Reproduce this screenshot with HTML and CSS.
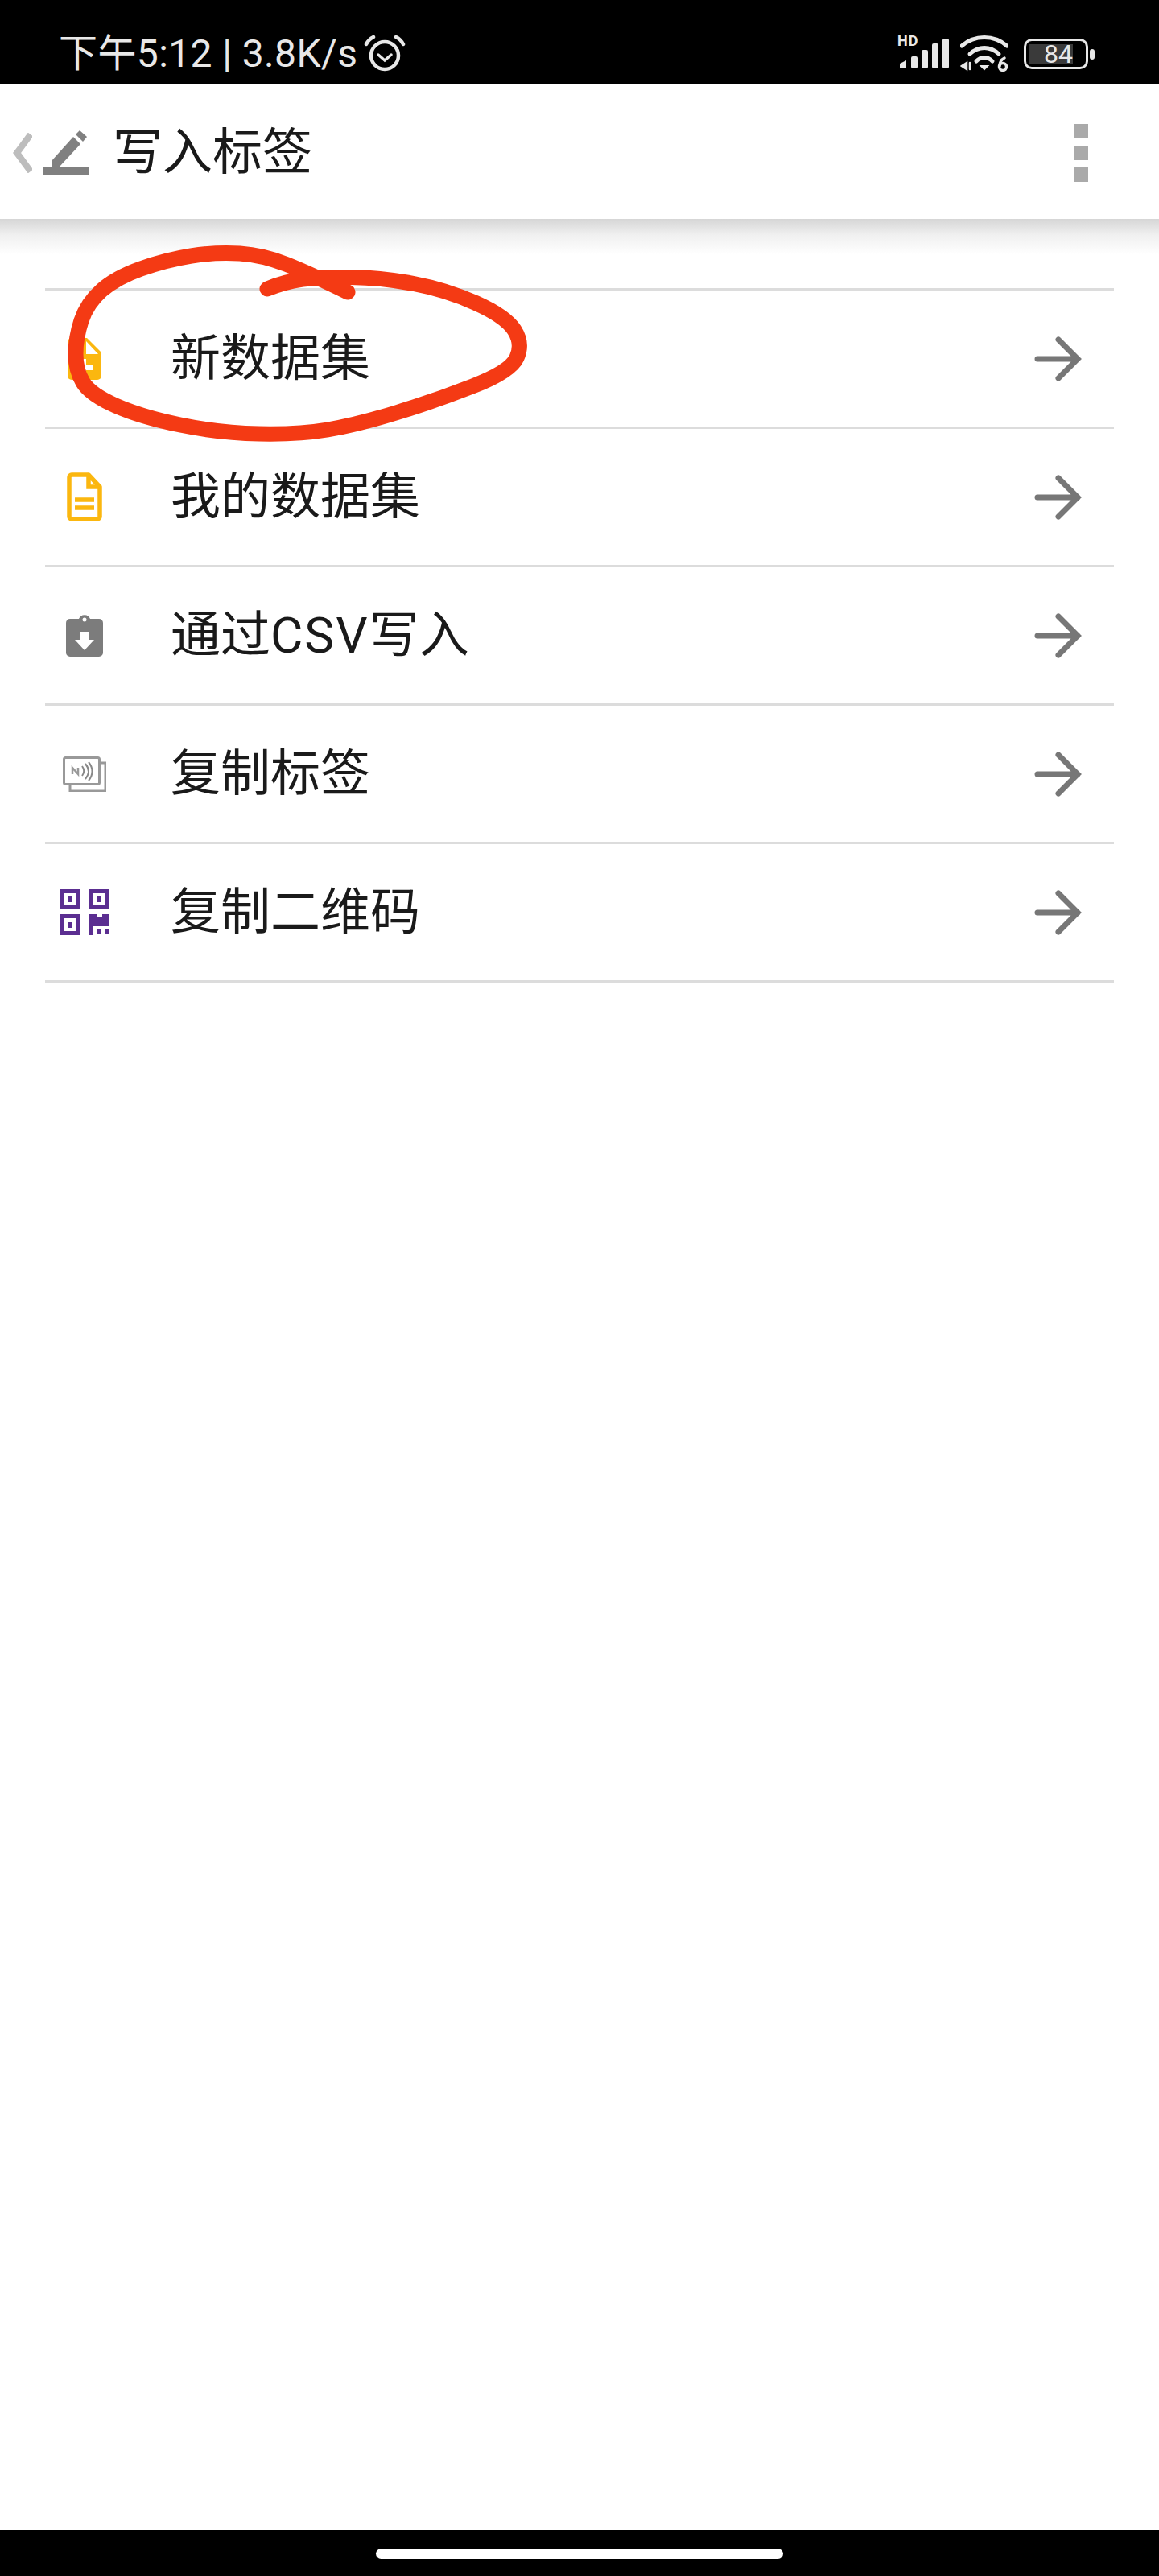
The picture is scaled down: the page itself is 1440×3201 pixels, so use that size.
FILE: index.html
```html
<!DOCTYPE html>
<html lang="zh-CN">
<head>
  <meta charset="UTF-8" />
  <meta name="viewport" content="width=device-width, initial-scale=1.0" />
  <title>写入标签</title>
  <link rel="stylesheet" href="styles.css">
</head>
<body>

  <div class="page">
    <!-- Status bar -->
    <div class="status-bar">
      <div class="status-left">
        <span class="status-text">下午5:12 | 3.8K/s</span>
        <svg class="alarm-icon" viewBox="0 0 52 46" fill="none" stroke="#e8e8e8" stroke-linecap="round">
          <circle cx="26" cy="25" r="17" stroke-width="4.5"/>
          <path d="M18 24l8 7 8-7" stroke-width="3.5"/>
          <path d="M3 11c2-4 5-7 9-9M49 11c-2-4-5-7-9-9" stroke-width="4.5"/>
        </svg>
      </div>
      <div class="status-right">
        <div class="signal">
          <span class="hd-label">HD</span>
          <svg class="signal-icon" viewBox="0 0 64 46" fill="#e8e8e8">
            <path d="M3 35l8-4v10H3z"/>
            <rect x="17" y="26" width="8" height="15" rx="2"/>
            <rect x="30" y="18" width="8" height="23" rx="2"/>
            <rect x="43" y="10" width="8" height="31" rx="2"/>
            <rect x="56" y="4" width="8" height="37" rx="2"/>
          </svg>
        </div>
        <svg class="wifi-icon" viewBox="0 0 60 46" fill="none" stroke="#e8e8e8" stroke-linecap="round">
          <path d="M2 13c16-14 40-14 56 0" stroke-width="5"/>
          <path d="M12 23c11-10 25-10 36 0" stroke-width="5"/>
          <path d="M20 32c6-6 14-6 20 0" stroke-width="5"/>
          <path d="M26 38h8l-4 4z" fill="#e8e8e8" stroke-width="2"/>
          <path d="M8 34v8l-6-4zM12 34v8" stroke-width="2.5" fill="#e8e8e8"/>
          <circle cx="53" cy="39" r="4.5" stroke-width="3.5"/>
          <path d="M49 38c0-5 2-8 6-10" stroke-width="3.5"/>
        </svg>
        <div class="battery">
          <div class="battery-body">
            <div class="battery-fill">84</div>
          </div>
          <div class="battery-nub"></div>
        </div>
      </div>
    </div>

    <!-- Toolbar -->
    <div class="toolbar">
      <svg class="back-icon" viewBox="0 0 24 50" fill="none" stroke="#bdbdbd" stroke-width="8">
        <path d="M22 2L5 25l17 23"/>
      </svg>
      <svg class="pencil-icon" viewBox="0 0 56 56" fill="#808080">
        <path d="M10 38L37 8l9 9-27 29H10z"/>
        <path d="M40 5l5-5 9 8-5 6z"/>
        <rect x="0" y="46" width="56" height="10"/>
      </svg>
      <h1 class="toolbar-title">写入标签</h1>
      <div class="more-menu">
        <span></span>
        <span></span>
        <span></span>
      </div>
    </div>

    <!-- Menu -->
    <div class="content">
      <ul class="menu-list">
        <li class="menu-row">
          <span class="row-icon">
            <svg width="42" height="52" viewBox="0 0 42 52">
              <path d="M5 0h19l18 18v29a5 5 0 0 1-5 5H5a5 5 0 0 1-5-5V5a5 5 0 0 1 5-5z" fill="#fbb70f"/>
              <path d="M23 4l15 16H23z" fill="#fff"/>
              <path d="M17 26h6v8h8v6h-8v8h-6v-8H9v-6h8z" fill="#fff"/>
            </svg>
          </span>
          <span class="row-label">新数据集</span>
          <svg class="row-arrow" viewBox="0 0 60 60" fill="none" stroke="#777" stroke-width="7" stroke-linecap="round"><path d="M5 30h50M31 6l24 24-24 24"/></svg>
        </li>
        <li class="menu-row">
          <span class="row-icon">
            <svg width="44" height="61" viewBox="0 0 44 61" fill="none" stroke="#fbb70f" stroke-width="5.5">
              <path d="M6 3h21l14 15v37a3 3 0 0 1-3 3H6a3 3 0 0 1-3-3V6a3 3 0 0 1 3-3z" stroke-linejoin="round"/>
              <path d="M27 3v15h14"/>
              <path d="M10 34h24M10 44h24"/>
            </svg>
          </span>
          <span class="row-label">我的数据集</span>
          <svg class="row-arrow" viewBox="0 0 60 60" fill="none" stroke="#777" stroke-width="7" stroke-linecap="round"><path d="M5 30h50M31 6l24 24-24 24"/></svg>
        </li>
        <li class="menu-row">
          <span class="row-icon">
            <svg width="46" height="52" viewBox="0 0 46 52">
              <path d="M5 5h11a7.500 7.500 0 0 1 14 0h11a5 5 0 0 1 5 5v37a5 5 0 0 1-5 5H5a5 5 0 0 1-5-5V10a5 5 0 0 1 5-5z" fill="#7c7c7c"/>
              <circle cx="23" cy="6" r="2.500" fill="#fff"/>
              <path d="M18 21h10v10h7L23 44 11 31h7z" fill="#fff"/>
            </svg>
          </span>
          <span class="row-label">通过<span class="latin">CSV</span>写入</span>
          <svg class="row-arrow" viewBox="0 0 60 60" fill="none" stroke="#777" stroke-width="7" stroke-linecap="round"><path d="M5 30h50M31 6l24 24-24 24"/></svg>
        </li>
        <li class="menu-row">
          <span class="row-icon">
            <svg width="54" height="44" viewBox="0 0 54 44" fill="none" stroke="#999" stroke-width="3">
              <rect x="1.500" y="1.500" width="44" height="33" rx="2"/>
              <path d="M46 8h7v35H9v-8"/>
              <path d="M12 22v-8l7 8v-8" stroke-width="2.5"/>
              <path d="M24 12c3 4 3 8 0 12M28 9c5 6 5 13 0 19M32 7c6 7 6 16 0 23" stroke="#888" stroke-width="2"/>
            </svg>
          </span>
          <span class="row-label">复制标签</span>
          <svg class="row-arrow" viewBox="0 0 60 60" fill="none" stroke="#777" stroke-width="7" stroke-linecap="round"><path d="M5 30h50M31 6l24 24-24 24"/></svg>
        </li>
        <li class="menu-row">
          <span class="row-icon">
            <svg width="62" height="57" viewBox="0 0 62 57" fill="#5b2e91">
              <path fill-rule="evenodd" d="M0 0h26v25H0zM5 5v15h16V5z"/>
              <rect x="10" y="9" width="6" height="7"/>
              <path fill-rule="evenodd" d="M36 0h26v25H36zM41 5v15h16V5z"/>
              <rect x="46" y="9" width="6" height="7"/>
              <path fill-rule="evenodd" d="M0 31h26v26H0zM5 36v16h16V36z"/>
              <rect x="10" y="41" width="6" height="7"/>
              <path d="M36 31h10v4h7v-4h9v15H41v11h-5z"/>
              <rect x="47" y="50" width="5" height="5"/>
              <rect x="56" y="50" width="5" height="5"/>
            </svg>
          </span>
          <span class="row-label">复制二维码</span>
          <svg class="row-arrow" viewBox="0 0 60 60" fill="none" stroke="#777" stroke-width="7" stroke-linecap="round"><path d="M5 30h50M31 6l24 24-24 24"/></svg>
        </li>
      </ul>
    </div>

    <!-- Nav bar -->
    <div class="nav-bar">
      <div class="nav-pill"></div>
    </div>

    <!-- Red marker scribble on top of the screenshot -->
    <svg class="scribble" viewBox="0 0 1440 3201" fill="none">
      <path d="M432 363Q385 340 356 328.500Q327 317 298 315Q269 313 237.500 318Q206 323 175 334Q144 345 126 361Q108 377 101 398.500Q94 420 94 440Q94 460 103 475Q112 490 143.500 504Q175 518 224 528Q273 538 322 539Q371 540 407 534Q443 528 492 513Q541 498 587 480Q634 462 642 444.500Q650 427 639 410Q628 393 591 376.500Q554 360 514 352.500Q474 345 436 344.500Q398 344 376 347Q354 350 332 359" stroke="#f43a14" stroke-width="19" stroke-linecap="round" stroke-linejoin="round"/>
    </svg>
  </div>

</body>
</html>
```

FILE: styles.css
```css
* {
  box-sizing: border-box;
}

html, body {
  margin: 0;
  padding: 0;
}

body {
  font-family: 'Roboto', 'Noto Sans CJK SC', sans-serif;
  background: #fff;
  color: #1a1a1a;
}

.page {
  position: relative;
  width: 1440px;
  height: 3201px;
  display: flex;
  flex-direction: column;
  overflow: hidden;
}

/* status bar */
.status-bar {
  height: 104px;
  flex: none;
  background: #000;
  color: #e8e8e8;
  display: flex;
  align-items: center;
  justify-content: space-between;
  padding: 30px 80px 0 73px;
}

.status-left {
  display: flex;
  align-items: center;
  gap: 8px;
}

.status-text {
  font-size: 48px;
  line-height: 54px;
  letter-spacing: 0.4px;
  white-space: nowrap;
}

.alarm-icon {
  width: 52px;
  height: 46px;
}

.status-right {
  display: flex;
  align-items: center;
}

.signal {
  position: relative;
  width: 64px;
  height: 46px;
  margin-right: 14px;
}

.signal-icon {
  display: block;
  width: 64px;
  height: 46px;
}

.hd-label {
  position: absolute;
  left: 0;
  top: -4px;
  font-size: 18px;
  line-height: 22px;
  font-weight: 700;
  letter-spacing: 1px;
  color: #e8e8e8;
}

.wifi-icon {
  width: 60px;
  height: 46px;
  margin-right: 19px;
}

.battery {
  display: flex;
  align-items: center;
  gap: 2px;
}

.battery-body {
  width: 80px;
  height: 38px;
  border: 3px solid #e8e8e8;
  border-radius: 10px;
  padding: 4px;
}

.battery-fill {
  width: 54px;
  height: 24px;
  background: #3a3a3a;
  color: #e8e8e8;
  font-size: 32px;
  line-height: 24px;
  text-align: right;
}

.battery-nub {
  width: 6px;
  height: 13px;
  background: #e8e8e8;
  border-radius: 3px;
}

/* toolbar */
.toolbar {
  height: 168px;
  flex: none;
  display: flex;
  align-items: center;
  padding: 4px 88px 0 16px;
  background: #fff;
}

.back-icon {
  width: 24px;
  height: 50px;
  margin-right: 14px;
}

.pencil-icon {
  width: 56px;
  height: 56px;
  margin-right: 30px;
}

.toolbar-title {
  margin: 0;
  font-size: 62px;
  font-weight: 400;
  line-height: 72px;
  color: #1a1a1a;
}

.more-menu {
  margin-left: auto;
  display: flex;
  flex-direction: column;
  gap: 9px;
}

.more-menu span {
  display: block;
  width: 18px;
  height: 18px;
  background: #aaa;
}

/* menu list */
.content {
  flex: 1;
  padding: 86px 56px 0;
  background: linear-gradient(to bottom, #d6d6d6, #f0f0f0 20px, #fbfbfb 38px, #fff 44px) no-repeat top / 100% 44px;
}

.menu-list {
  list-style: none;
  margin: 0;
  padding: 0;
  border-bottom: 3px solid #dcdcdc;
}

.menu-row {
  height: 172px;
  display: flex;
  align-items: center;
  border-top: 3px solid #dcdcdc;
}

.row-icon {
  width: 98px;
  margin-right: 58px;
  display: flex;
  justify-content: center;
  flex: none;
}

.row-label {
  font-size: 62px;
  line-height: 72px;
  color: #1a1a1a;
}

.latin {
  letter-spacing: 2px;
}

.row-arrow {
  width: 60px;
  height: 60px;
  margin-left: auto;
  margin-right: 40px;
}

/* nav bar */
.nav-bar {
  height: 57px;
  flex: none;
  background: #000;
  display: flex;
  justify-content: center;
  padding-top: 23px;
}

.nav-pill {
  width: 506px;
  height: 13px;
  background: #fff;
  border-radius: 7px;
}

.scribble {
  position: absolute;
  left: 0;
  top: 0;
  width: 1440px;
  height: 3201px;
  pointer-events: none;
}
```
